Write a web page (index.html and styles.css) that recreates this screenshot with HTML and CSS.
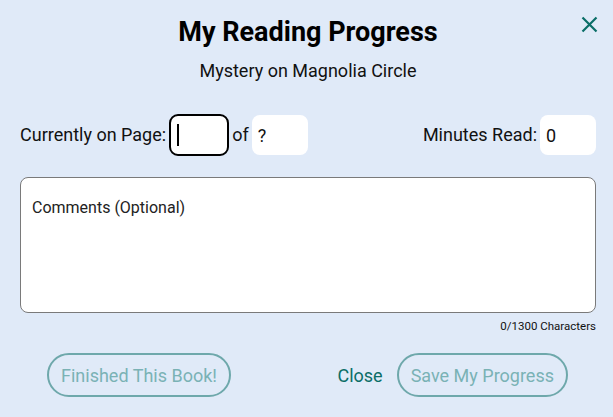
FILE: index.html
```html
<!DOCTYPE html>
<html lang="en">
<head>
<meta charset="utf-8">
<title>My Reading Progress</title>
<link rel="stylesheet" href="styles.css">
</head>
<body>
<div class="dialog">
  <header class="header">
    <h1 class="title">My Reading Progress</h1>
    <p class="subtitle">Mystery on Magnolia Circle</p>
    <button class="close-x" aria-label="Close">
      <svg width="17" height="17" viewBox="0 0 17 17"><path d="M1.5 1.5 L15.5 15.5 M15.5 1.5 L1.5 15.5" stroke="#0b6e67" stroke-width="2.2" fill="none"/></svg>
    </button>
  </header>
  <div class="fields">
    <div class="group">
      <span class="label">Currently on Page:</span>
      <div class="field focused"><span class="caret"></span></div>
      <span class="label">of</span>
      <div class="field">?</div>
    </div>
    <div class="group">
      <span class="label">Minutes Read:</span>
      <div class="field">0</div>
    </div>
  </div>
  <div class="comments">Comments (Optional)</div>
  <div class="counter">0/1300 Characters</div>
  <div class="footer">
    <button class="pill">Finished This Book!</button>
    <div class="actions">
      <button class="link">Close</button>
      <button class="pill">Save My Progress</button>
    </div>
  </div>
</div>
</body>
</html>
```
FILE: styles.css
```css
* { box-sizing: border-box; }
html, body { margin: 0; height: 100%; }
body {
  background: #e0eaf8;
  font-family: Roboto, "Liberation Sans", sans-serif;
  color: #111;
}
.dialog {
  padding: 15px 17px 0 20px;
}
.header {
  position: relative;
  text-align: center;
}
.title {
  margin: 0;
  font-size: 27px;
  font-weight: 700;
  line-height: 34px;
  color: #000;
}
.subtitle {
  margin: 11px 0 0;
  font-size: 18px;
  line-height: 22px;
}
.close-x {
  position: absolute;
  top: 1px;
  right: -2px;
  border: 0;
  background: none;
  padding: 0;
  width: 17px;
  height: 17px;
  display: flex;
}
.fields {
  margin-top: 32px;
  display: flex;
  justify-content: space-between;
  align-items: center;
}
.group {
  display: flex;
  align-items: center;
  gap: 3px;
}
.label {
  font-size: 18px;
  line-height: 22px;
}
.field {
  width: 56px;
  height: 40px;
  background: #fff;
  border-radius: 8px;
  padding: 0 6px;
  display: flex;
  align-items: center;
  font-size: 18px;
}
.field.focused {
  width: 60px;
  height: 42px;
  border: 2px solid #000;
  border-radius: 9px;
}
.caret {
  width: 1.5px;
  height: 22px;
  background: #000;
}
.comments {
  margin-top: 21px;
  height: 136px;
  background: #fff;
  border: 1px solid #7a7a7a;
  border-radius: 8px;
  padding: 20px 11px;
  font-size: 16px;
  line-height: 19px;
  color: #222;
}
.counter {
  margin-top: 7px;
  text-align: right;
  font-size: 11.5px;
  line-height: 13px;
}
.footer {
  margin-top: 20px;
  padding: 0 28px 0 27px;
  display: flex;
  justify-content: space-between;
  align-items: center;
}
.actions {
  display: flex;
  align-items: center;
  gap: 14px;
}
button {
  font-family: inherit;
  cursor: pointer;
}
.pill {
  height: 44px;
  padding: 0 12px;
  border: 2px solid #6ea8ab;
  border-radius: 22px;
  background: transparent;
  color: #7ab2b5;
  font-size: 18px;
}
.link {
  border: 0;
  background: none;
  padding: 0;
  color: #0b6e67;
  font-size: 18px;
}
```
